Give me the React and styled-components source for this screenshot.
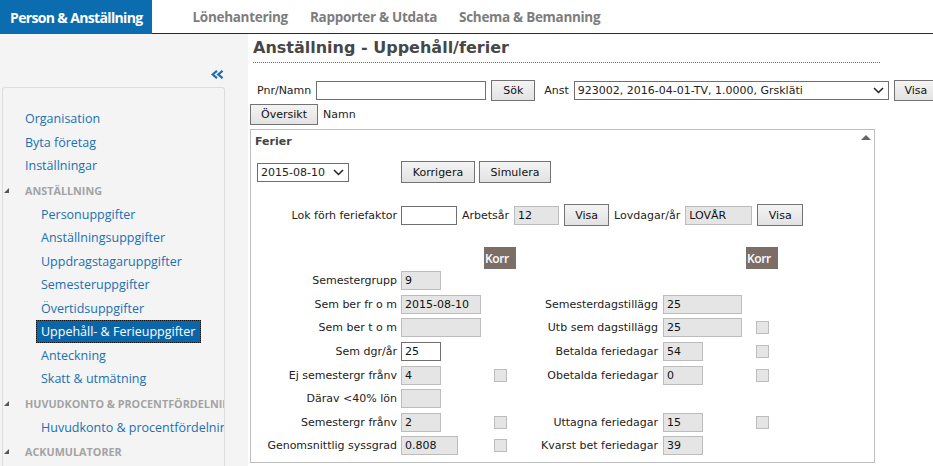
import React from 'react'
import styled, { createGlobalStyle } from 'styled-components'

const GlobalStyle = createGlobalStyle`
  html, body {
    margin: 0;
    padding: 0;
    background: #fff;
  }
  body {
    font-family: "DejaVu Sans", Verdana, sans-serif;
    font-size: 11px;
    color: #222;
    overflow: hidden;
  }
  * {
    box-sizing: border-box;
  }
`

const Page = styled.div`
  width: 933px;
  height: 466px;
  display: flex;
  flex-direction: column;
  overflow: hidden;
`

/* ---------- top navigation ---------- */

const TopNav = styled.nav`
  display: flex;
  height: 34px;
  flex-shrink: 0;
  border-bottom: 1px solid #2a2a2a;
  font-family: "Open Sans", sans-serif;
  font-weight: 700;
`

const Tab = styled.div`
  display: flex;
  align-items: center;
  height: ${p => (p.$active ? '34px' : '33px')};
  padding: 0 ${p => (p.$active ? '9px 0 10px' : '11px')};
  margin-left: ${p => (p.$first ? '30px' : '0')};
  background: ${p => (p.$active ? '#0b6db0' : 'transparent')};
  color: ${p => (p.$active ? '#fff' : '#7d7d7d')};
  font-size: ${p => (p.$active ? '14px' : '13.5px')};
  letter-spacing: ${p => (p.$active ? '-0.65px' : '-0.3px')};
  white-space: nowrap;
`

/* ---------- layout ---------- */

const Main = styled.div`
  flex: 1;
  display: flex;
  min-height: 0;
`

const Sidebar = styled.aside`
  width: 248px;
  flex-shrink: 0;
  background: #f4f4f4;
  display: flex;
  flex-direction: column;
  font-family: "Open Sans", sans-serif;
`

const CollapseRow = styled.div`
  display: flex;
  justify-content: flex-end;
  width: 225px;
  padding-right: 1px;
  margin-top: 36px;
  height: 9px;
`

const NavPanel = styled.div`
  margin: 8px 0 0 2px;
  width: 223px;
  flex: 1;
  border: 1px solid #dcdcdc;
  border-bottom: none;
  border-radius: 3px 3px 0 0;
  padding-top: 19px;
  overflow: hidden;
`

const NavItem = styled.div`
  height: 23.5px;
  display: flex;
  align-items: center;
  padding-left: ${p => (p.$sub ? '38px' : '22px')};
  font-size: 12.5px;
  color: #1b6fb3;
  white-space: nowrap;
`

const ActiveLabel = styled.span`
  display: inline-flex;
  align-items: center;
  height: 23px;
  margin-left: -5px;
  padding: 0 5px 0 4px;
  background: #0b66a9;
  color: #fff;
  border: 1px dotted #111;
`

const NavHeader = styled.div`
  height: 25px;
  display: flex;
  align-items: center;
  padding-left: 1px;
  font-size: 10.8px;
  font-weight: 700;
  color: #a3a3a3;
  white-space: nowrap;
`

const HeaderTriangle = styled.span`
  width: 0;
  height: 0;
  border-left: 5px solid transparent;
  border-bottom: 5px solid #555;
  margin-right: 16px;
  flex-shrink: 0;
`

const Content = styled.main`
  flex: 1;
  padding-left: 2px;
  min-width: 0;
`

const Title = styled.h1`
  margin: 4px 0 0 3px;
  width: 627px;
  height: 25px;
  padding-bottom: 4px;
  border-bottom: 1px dotted #2f7fb5;
  font-family: "DejaVu Sans", Verdana, sans-serif;
  font-size: 16px;
  line-height: 20px;
  font-weight: 700;
  color: #474747;
  white-space: nowrap;
`

const ToolRow = styled.div`
  display: flex;
  align-items: center;
  height: ${p => p.$h || 22}px;
  margin-top: ${p => p.$mt || 0}px;
  padding-left: ${p => p.$pl || 0}px;
  gap: 5px;
  white-space: nowrap;
`

const Label = styled.span`
  margin-left: ${p => p.$ml || 0}px;
`

const Button = styled.button`
  width: ${p => p.$w}px;
  height: ${p => p.$h || 21}px;
  padding: 0;
  flex-shrink: 0;
  font: inherit;
  color: #111;
  background: linear-gradient(#f4f4f4, #e2e2e2);
  border: 1px solid #737373;
  border-radius: 0;
  margin-left: ${p => p.$ml || 0}px;
`

const Field = styled.input.attrs({ readOnly: true })`
  width: ${p => p.$w}px;
  height: ${p => p.$h || 19}px;
  padding: 0 3px;
  flex-shrink: 0;
  font: inherit;
  color: #111;
  background: ${p => (p.$editable ? '#fff' : '#e5e5e5')};
  border: 1px solid ${p => (p.$editable ? '#6f6f6f' : '#bcbcbc')};
  border-radius: 0;
  outline: none;
`

const SelectBox = styled.div`
  width: ${p => p.$w}px;
  height: ${p => p.$h || 19}px;
  display: flex;
  align-items: center;
  justify-content: space-between;
  flex-shrink: 0;
  padding: 0 4px 0 3px;
  background: #fff;
  border: 1px solid #6f6f6f;
  margin-left: ${p => p.$ml || 0}px;
`

/* ---------- Ferier panel ---------- */

const Panel = styled.section`
  margin-top: 4px;
  width: 625px;
  height: 334px;
  border: 1px solid #bdbdbd;
`

const PanelHeader = styled.div`
  height: 23px;
  display: flex;
  justify-content: space-between;
  padding-left: 4px;
`

const PanelTitle = styled.span`
  font-weight: 700;
  color: #444;
  line-height: 23px;
`

const CollapseArrow = styled.span`
  width: 0;
  height: 0;
  margin: 5px 3px 0 0;
  border-left: 5px solid transparent;
  border-right: 5px solid transparent;
  border-bottom: 5px solid #666;
`

const FormRow = styled.div`
  display: grid;
  grid-template-columns: 150px 130px 132px 1fr;
  align-items: center;
  height: ${p => p.$h || 23.6}px;
  margin-top: ${p => p.$mt || 0}px;
  white-space: nowrap;
`

const RowLabel = styled.span`
  text-align: right;
  padding-right: ${p => p.$pr || 4}px;
  color: #222;
`

const FieldCell = styled.div`
  display: grid;
  grid-template-columns: 83px 32px;
  align-items: center;
`

const CheckBox = styled.span`
  justify-self: center;
  width: 13px;
  height: 13px;
  background: #e5e5e5;
  border: 1px solid #bcbcbc;
`

const KorrTag = styled.span`
  grid-column: 2;
  width: 32px;
  height: 22px;
  display: flex;
  align-items: center;
  padding-left: 1px;
  background: #7a6e67;
  color: #fff;
  font-family: "Open Sans", sans-serif;
  font-size: 12px;
  font-weight: 600;
  letter-spacing: -0.4px;
`

const InlineGroup = styled.div`
  grid-column: 2 / -1;
  display: flex;
  align-items: center;
  gap: ${p => p.$gap || 5}px;
`

const Chevron = () => (
  <svg width="11" height="7" viewBox="0 0 11 7">
    <path d="M1 1 L5.5 5.5 L10 1" fill="none" stroke="#222" strokeWidth="1.5" />
  </svg>
)

const DoubleChevron = () => (
  <svg width="13" height="9" viewBox="0 0 13 9">
    <path d="M6 0.8 L1.6 4.5 L6 8.2 M11.6 0.8 L7.2 4.5 L11.6 8.2" fill="none" stroke="#1b6fb3" strokeWidth="2.2" />
  </svg>
)

const Select = ({ value, width, ml }) => (
  <SelectBox $w={width} $ml={ml}>
    <span>{value}</span>
    <Chevron />
  </SelectBox>
)

const navItems = [
  { label: 'Organisation' },
  { label: 'Byta företag' },
  { label: 'Inställningar' },
  { header: 'ANSTÄLLNING' },
  { label: 'Personuppgifter', sub: true },
  { label: 'Anställningsuppgifter', sub: true },
  { label: 'Uppdragstagaruppgifter', sub: true },
  { label: 'Semesteruppgifter', sub: true },
  { label: 'Övertidsuppgifter', sub: true },
  { label: 'Uppehåll- & Ferieuppgifter', sub: true, active: true },
  { label: 'Anteckning', sub: true },
  { label: 'Skatt & utmätning', sub: true },
  { header: 'HUVUDKONTO & PROCENTFÖRDELNING' },
  { label: 'Huvudkonto & procentfördelning', sub: true },
  { header: 'ACKUMULATORER' },
]

const W = { sm: 40, md: 57, lg: 80 }
const WR = { sm: 40, lg: 79 }

const rows = [
  { left: { label: 'Semestergrupp', value: '9', w: 'sm' } },
  {
    left: { label: 'Sem ber fr o m', value: '2015-08-10', w: 'lg' },
    right: { label: 'Semesterdagstillägg', value: '25', w: 'lg' },
  },
  {
    left: { label: 'Sem ber t o m', value: '', w: 'lg' },
    right: { label: 'Utb sem dagstillägg', value: '25', w: 'lg', cb: true },
  },
  {
    left: { label: 'Sem dgr/år', value: '25', w: 'sm', editable: true },
    right: { label: 'Betalda feriedagar', value: '54', w: 'sm', cb: true },
  },
  {
    left: { label: 'Ej semestergr frånv', value: '4', w: 'sm', cb: true },
    right: { label: 'Obetalda feriedagar', value: '0', w: 'sm', cb: true },
  },
  { left: { label: 'Därav <40% lön', value: '', w: 'sm' } },
  {
    left: { label: 'Semestergr frånv', value: '2', w: 'sm', cb: true },
    right: { label: 'Uttagna feriedagar', value: '15', w: 'sm', cb: true },
  },
  {
    left: { label: 'Genomsnittlig syssgrad', value: '0.808', w: 'md', cb: true },
    right: { label: 'Kvarst bet feriedagar', value: '39', w: 'sm' },
  },
]

const FieldPair = ({ item, widths, labelPad }) => {
  if (!item) return (<><span /><span /></>)
  return (
    <>
      <RowLabel $pr={labelPad}>{item.label}</RowLabel>
      <FieldCell>
        <Field $w={widths[item.w]} $editable={item.editable} value={item.value} />
        {item.cb && <CheckBox />}
      </FieldCell>
    </>
  )
}

const App = () => (
  <Page>
    <GlobalStyle />
    <TopNav>
      <Tab $active>Person &amp; Anställning</Tab>
      <Tab $first>Lönehantering</Tab>
      <Tab>Rapporter &amp; Utdata</Tab>
      <Tab>Schema &amp; Bemanning</Tab>
    </TopNav>

    <Main>
      <Sidebar>
        <CollapseRow>
          <DoubleChevron />
        </CollapseRow>
        <NavPanel>
          {navItems.map(item =>
            item.header ? (
              <NavHeader key={item.header}>
                <HeaderTriangle />
                {item.header}
              </NavHeader>
            ) : (
              <NavItem key={item.label} $sub={item.sub}>
                {item.active ? <ActiveLabel>{item.label}</ActiveLabel> : item.label}
              </NavItem>
            )
          )}
        </NavPanel>
      </Sidebar>

      <Content>
        <Title>Anställning - Uppehåll/ferier</Title>

        <ToolRow $mt={16} $pl={7}>
          <Label>Pnr/Namn</Label>
          <Field $w={170} $editable value="" />
          <Button $w={44}>Sök</Button>
          <Label $ml={4}>Anst</Label>
          <Select value="923002, 2016-04-01-TV, 1.0000, Grskläti" width={315} />
          <Button $w={44}>Visa</Button>
        </ToolRow>

        <ToolRow $mt={2}>
          <Button $w={68}>Översikt</Button>
          <Label>Namn</Label>
        </ToolRow>

        <Panel>
          <PanelHeader>
            <PanelTitle>Ferier</PanelTitle>
            <CollapseArrow />
          </PanelHeader>

          <FormRow $h={22} $mt={8}>
            <ToolRow>
              <Select value="2015-08-10" width={92} ml={6} />
            </ToolRow>
            <InlineGroup $gap={4}>
              <Button $w={74} $h={22}>Korrigera</Button>
              <Button $w={72} $h={22}>Simulera</Button>
            </InlineGroup>
          </FormRow>

          <FormRow $h={22} $mt={21}>
            <RowLabel>Lok förh feriefaktor</RowLabel>
            <InlineGroup>
              <Field $w={56} $editable value="" />
              <Label>Arbetsår</Label>
              <Field $w={45} value="12" />
              <Button $w={45} $h={22}>Visa</Button>
              <Label>Lovdagar/år</Label>
              <Field $w={67} value="LOVÅR" />
              <Button $w={46} $h={22}>Visa</Button>
            </InlineGroup>
          </FormRow>

          <FormRow $h={22} $mt={21}>
            <span />
            <FieldCell>
              <KorrTag>Korr</KorrTag>
            </FieldCell>
            <span />
            <FieldCell>
              <KorrTag>Korr</KorrTag>
            </FieldCell>
          </FormRow>

          {rows.map(row => (
            <FormRow key={row.left.label}>
              <FieldPair item={row.left} widths={W} labelPad={4} />
              <FieldPair item={row.right} widths={WR} labelPad={5} />
            </FormRow>
          ))}
        </Panel>
      </Content>
    </Main>
  </Page>
)

export default App
